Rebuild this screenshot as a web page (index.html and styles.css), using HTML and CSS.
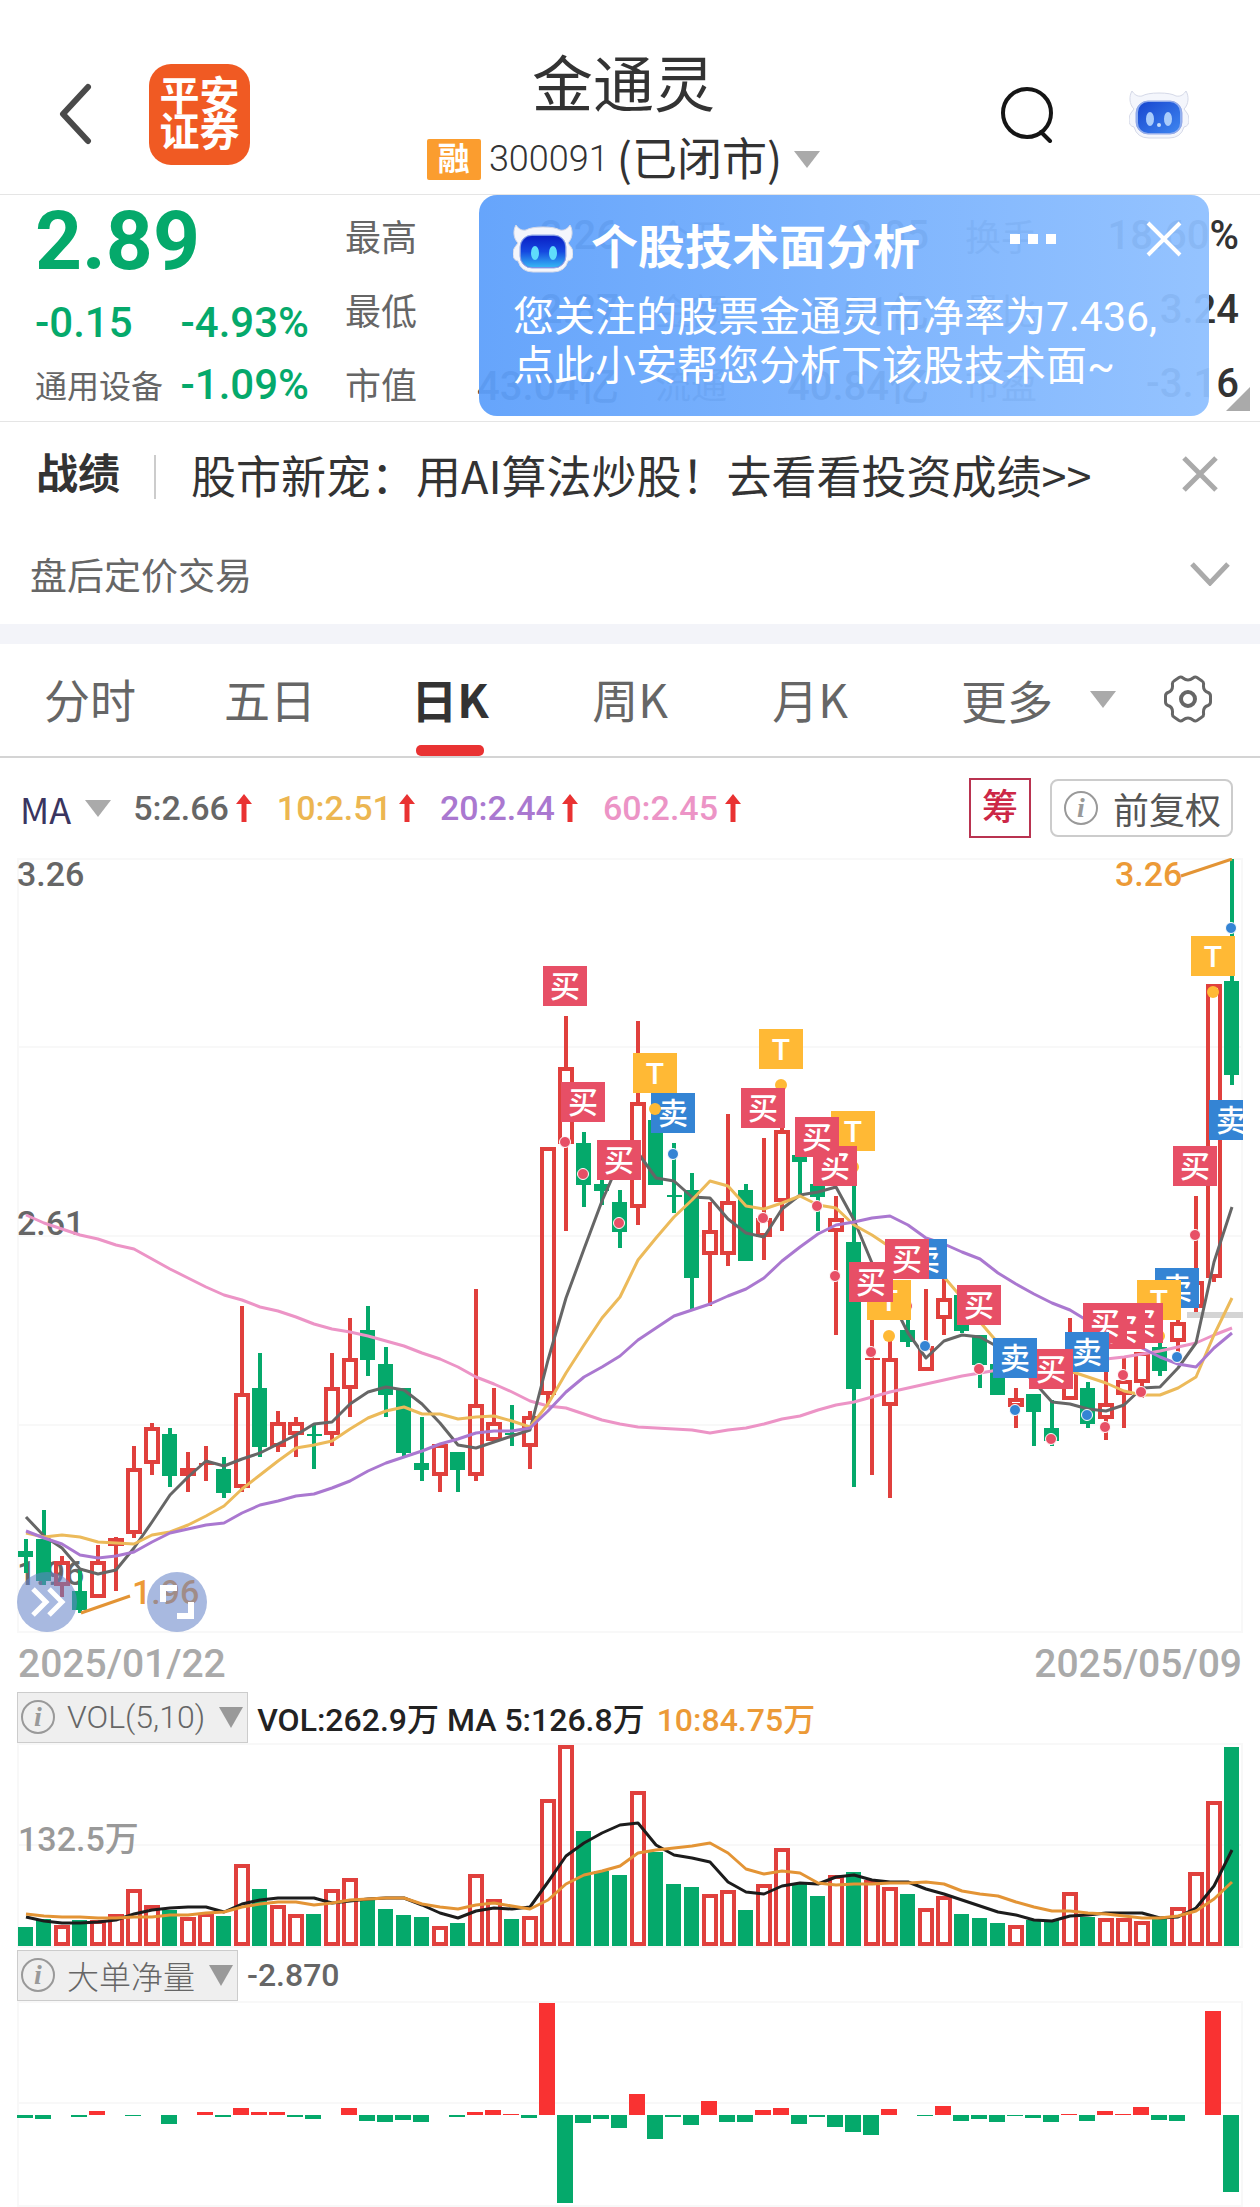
FILE: index.html
```html
<!DOCTYPE html>
<html lang="zh-CN">
<head>
<meta charset="utf-8">
<meta name="viewport" content="width=device-width, initial-scale=1">
<title>金通灵 300091</title>
<link rel="stylesheet" href="styles.css">
</head>
<body>
<svg class="defs" aria-hidden="true">
  <defs>
    <linearGradient id="face" x1="0" y1="0" x2="0" y2="1"><stop offset="0" stop-color="#0a1fc4"/><stop offset=".5" stop-color="#1548e0"/><stop offset="1" stop-color="#35b4f4"/></linearGradient>
    <linearGradient id="face-soft" x1="0" y1="0" x2="1" y2="1"><stop offset="0" stop-color="#1746cf"/><stop offset="1" stop-color="#3f86f0"/></linearGradient>
    <symbol id="robot" viewBox="0 0 60 50">
      <path d="M3 2C0 7 0 15 5 20L2 24Q0 26 0 31Q0 37 5 38Q8 49 20 49H40Q52 49 55 38Q60 37 60 31Q60 26 58 24L55 20C60 15 60 7 57 2C55 5 52 8 47 7Q42 4 30 4Q18 4 13 7C8 8 5 5 3 2Z" fill="#f4f6fc" stroke="#d5d9e8"/>
      <rect x="7" y="12" width="46" height="33" rx="12" fill="currentColor" stroke="#93a8e6"/>
    </symbol>
  </defs>
</svg>

<header class="topbar">
  <div class="topbar-side">
    <button class="icon-button" aria-label="返回"><svg width="34" height="62" viewBox="0 0 34 62"><path d="M30 4 5 31 30 58" fill="none" stroke="#4a4a4a" stroke-width="6" stroke-linecap="round" stroke-linejoin="round"/></svg></button>
    <a class="brand" href="#">平安<br>证券</a>
  </div>
  <div class="topbar-title">
    <h1>金通灵</h1>
    <button class="stock-switch"><span class="margin-tag">融</span><span class="code">300091</span><span class="status">(已闭市)</span><i class="caret"></i></button>
  </div>
  <div class="topbar-side topbar-actions">
    <button class="icon-button" aria-label="搜索"><svg width="54" height="58" viewBox="0 0 54 58"><circle cx="27" cy="28" r="24" fill="none" stroke="#151515" stroke-width="4"/><path d="m41 47 9 9" stroke="#151515" stroke-width="4" stroke-linecap="round"/></svg></button>
    <button class="icon-button" aria-label="智能助手"><svg width="60" height="50" viewBox="0 0 60 50"><use href="#robot" color="#8fb0f2"/><rect x="9" y="13" width="42" height="31" rx="10" fill="url(#face-soft)"/><ellipse cx="21" cy="30" rx="4" ry="7" fill="#a9ccfb"/><ellipse cx="39" cy="30" rx="4" ry="7" fill="#a9ccfb"/><circle cx="30" cy="36" r="2" fill="#c5dcfb"/></svg></button>
  </div>
</header>

<section class="quote">
  <div class="price-box">
    <strong class="price">2.89</strong>
    <div class="change"><span>-0.15</span><span>-4.93%</span></div>
    <div class="sector"><a href="#">通用设备</a><span>-1.09%</span></div>
  </div>
  <dl class="stats">
    <div><dt>最高</dt><dd>3.26</dd></div>
    <div><dt>今开</dt><dd>3.05</dd></div>
    <div><dt>换手</dt><dd>18.60%</dd></div>
    <div><dt>最低</dt><dd>2.87</dd></div>
    <div><dt>金额</dt><dd>8.01亿</dd></div>
    <div><dt>量比</dt><dd>3.24</dd></div>
    <div><dt>市值</dt><dd>43.04亿</dd></div>
    <div><dt>流通</dt><dd>40.84亿</dd></div>
    <div><dt>市盈</dt><dd>-3.16</dd></div>
  </dl>
  <i class="corner"></i>
  <aside class="assistant">
    <div class="assistant-head">
      <svg width="60" height="50" viewBox="0 0 60 50"><use href="#robot" color="#5c7de6"/><rect x="8" y="13" width="44" height="31" rx="11" fill="url(#face)"/><ellipse cx="22" cy="30" rx="4" ry="7" fill="#5fdcfb"/><ellipse cx="40" cy="30" rx="4" ry="7" fill="#5fdcfb"/></svg>
      <h2>个股技术面分析</h2>
      <button class="icon-button more-dots" aria-label="更多操作"><svg width="46" height="10" viewBox="0 0 46 10"><path d="M0 0h10v10H0zM18 0h10v10H18zM36 0h10v10H36z" fill="#fff"/></svg></button>
      <button class="icon-button" aria-label="关闭提示"><svg width="36" height="36" viewBox="0 0 36 36"><path d="m2 2 32 32M34 2 2 34" stroke="#fff" stroke-width="4"/></svg></button>
    </div>
    <p>您关注的股票金通灵市净率为7.436,<br>点此小安帮您分析下该股技术面~</p>
  </aside>
</section>

<section class="news">
  <strong>战绩</strong>
  <a href="#">股市新宠：用AI算法炒股！去看看投资成绩&gt;&gt;</a>
  <button class="icon-button" aria-label="关闭"><svg width="36" height="36" viewBox="0 0 36 36"><path d="m2 2 32 32M34 2 2 34" stroke="#aaa" stroke-width="5"/></svg></button>
</section>
<button class="after-hours"><span>盘后定价交易</span><svg width="40" height="24" viewBox="0 0 40 24"><path d="m2 2 18 19L38 2" fill="none" stroke="#aaa" stroke-width="5"/></svg></button>

<nav class="tabs">
  <button>分时</button>
  <button>五日</button>
  <button class="active">日K</button>
  <button>周K</button>
  <button>月K</button>
  <div class="tabs-more">
    <button>更多<i class="caret"></i></button>
    <button class="icon-button" aria-label="设置"><svg width="48" height="48" viewBox="0 0 48 48"><path d="M15 2.500Q17 1.500 19 3Q24 7 29 3Q31 1.500 33 2.500L38 6Q40 7 39.500 10Q39 16 44 17.500Q46.500 18.500 46.500 21V27Q46.500 29.500 44 30.500Q39 32 39.500 38Q40 41 38 42L33 45.500Q31 46.500 29 45Q24 41 19 45Q17 46.500 15 45.500L10 42Q8 41 8.500 38Q9 32 4 30.500Q1.500 29.500 1.500 27V21Q1.500 18.500 4 17.500Q9 16 8.500 10Q8 7 10 6Z" fill="none" stroke="#666" stroke-width="3"/><circle cx="24" cy="24" r="7" fill="none" stroke="#666" stroke-width="4"/></svg></button>
  </div>
</nav>

<div class="ma-row">
  <button class="ma-select">MA<i class="caret"></i></button>
  <span class="ma ma5">5:2.66<svg width="16" height="28" viewBox="0 0 16 28"><path d="M8 0 16 10H10.500V28H5.500V10H0Z"/></svg></span>
  <span class="ma ma10">10:2.51<svg width="16" height="28" viewBox="0 0 16 28"><path d="M8 0 16 10H10.500V28H5.500V10H0Z"/></svg></span>
  <span class="ma ma20">20:2.44<svg width="16" height="28" viewBox="0 0 16 28"><path d="M8 0 16 10H10.500V28H5.500V10H0Z"/></svg></span>
  <span class="ma ma60">60:2.45<svg width="16" height="28" viewBox="0 0 16 28"><path d="M8 0 16 10H10.500V28H5.500V10H0Z"/></svg></span>
  <button class="chips">筹</button>
  <button class="adjust"><span class="info">i</span>前复权</button>
</div>

<main>
  <div class="kline">
    <svg id="kline" class="chart" viewBox="0 858 1260 776" role="img" aria-label="日K线图"></svg>
    <div class="kline-tools">
      <button aria-label="展开"><svg width="60" height="60" viewBox="0 0 60 60"><path d="M16 17 29 30 16 43M32 17 45 30 32 43" fill="none" stroke="#fff" stroke-width="5"/></svg></button>
      <button aria-label="全屏"><svg width="60" height="60" viewBox="0 0 60 60"><path d="M16 30V16H30M30 44H44V30" fill="none" stroke="#fff" stroke-width="6"/></svg></button>
    </div>
  </div>
  <div class="dates"><time datetime="2025-01-22">2025/01/22</time><time datetime="2025-05-09">2025/05/09</time></div>

  <div class="indicator">
    <button><span class="info">i</span>VOL(5,10)<i class="caret"></i></button>
    <span class="legend">VOL:262.9万 MA 5:126.8万</span>
    <span class="legend legend-orange">10:84.75万</span>
  </div>
  <svg id="volume" class="chart" viewBox="0 1743 1260 206" role="img" aria-label="成交量"></svg>

  <div class="indicator">
    <button><span class="info">i</span>大单净量<i class="caret"></i></button>
    <span class="legend legend-gray">-2.870</span>
  </div>
  <svg id="flow" class="chart" viewBox="0 2001 1260 206" role="img" aria-label="大单净量"></svg>
</main>
<script src="chart.js"></script>
</body>
</html>
```

FILE: styles.css
```css
* { box-sizing: border-box; }
body {
  margin: 0;
  background: #fff;
  color: #333;
  font-family: Roboto, "Noto Sans CJK SC", sans-serif;
}
h1, h2, p, dl, dd { margin: 0; }
a { color: inherit; text-decoration: none; }
svg { display: block; flex: none; }
button {
  margin: 0;
  padding: 0;
  border: 0;
  background: none;
  color: inherit;
  font: inherit;
  cursor: pointer;
}
.defs { position: absolute; width: 0; height: 0; }
.icon-button { display: block; flex: none; }
.caret {
  flex: none;
  border: 13px solid transparent;
  border-top: 17px solid #aaa;
  border-bottom: 0;
}
.info {
  display: inline-flex;
  align-items: center;
  justify-content: center;
  width: 34px;
  height: 34px;
  border: 2px solid #999;
  border-radius: 50%;
  color: #999;
  font: italic bold 28px/30px "Liberation Serif", serif;
}

.topbar {
  display: grid;
  grid-template-columns: 1fr auto 1fr;
  align-items: center;
  height: 195px;
  padding: 34px 71px 0 58px;
  border-bottom: 1px solid #e5e5e5;
}
.topbar-side { display: flex; align-items: center; gap: 57px; }
.topbar-actions { justify-content: flex-end; gap: 75px; }
.brand {
  width: 101px;
  height: 101px;
  padding-top: 15px;
  border-radius: 22px;
  background: #f05a23;
  color: #fff;
  font-size: 40px;
  font-weight: 700;
  line-height: 36px;
  text-align: center;
}
.topbar-title { padding-top: 8px; text-align: center; }
h1 { margin-bottom: 18px; font-size: 61px; font-weight: 400; line-height: 64px; }
.stock-switch { display: flex; align-items: center; height: 46px; }
.margin-tag {
  width: 54px;
  height: 41px;
  margin-right: 8px;
  border-radius: 2px;
  background: #fb9d2f;
  color: #fff;
  font-size: 32px;
  font-weight: 700;
  line-height: 40px;
}
.code { font-size: 36px; font-weight: 300; }
.status { margin: 0 12px 4px 8px; font: 45px/44px "Noto Sans CJK SC", sans-serif; }

.quote {
  position: relative;
  display: grid;
  grid-template-columns: 274px 1fr;
  gap: 36px;
  height: 227px;
  padding: 0 21px 0 35px;
  border-bottom: 1px solid #e5e5e5;
}
.price-box { color: #05a96b; font-size: 42px; font-weight: 500; }
.price { display: block; font-size: 82px; line-height: 92px; }
.change, .sector { display: flex; justify-content: space-between; align-items: center; }
.change { height: 70px; }
.sector { height: 54px; }
.sector a { color: #666; font-size: 32px; font-weight: 400; }
.stats {
  display: grid;
  grid-template-columns: repeat(3, 1fr);
  grid-auto-rows: 74px;
  column-gap: 36px;
  padding-top: 3px;
}
.stats div { display: flex; justify-content: space-between; align-items: center; }
.stats dt { color: #666; font-size: 36px; }
.stats dd { font-size: 40px; font-weight: 500; }
.corner {
  position: absolute;
  right: 10px;
  bottom: 10px;
  border-left: 24px solid transparent;
  border-bottom: 24px solid #aaa;
}
.assistant {
  position: absolute;
  top: 0;
  right: 51px;
  width: 730px;
  height: 221px;
  padding: 24px 27px 0 34px;
  border-radius: 18px;
  background: linear-gradient(90deg, rgba(94, 160, 251, .95), rgba(143, 192, 255, .95));
  color: #fff;
}
.assistant-head { display: flex; align-items: center; height: 58px; }
.assistant h2 { margin: 0 auto 0 18px; font-size: 47px; font-weight: 700; line-height: 58px; }
.more-dots { margin: 0 90px 18px 0; }
.assistant-head .icon-button:last-child { margin-bottom: 18px; }
.assistant p { padding-top: 16px; font-size: 41px; line-height: 49px; white-space: nowrap; }

.news {
  display: flex;
  align-items: center;
  height: 106px;
  padding: 0 42px 2px 36px;
  font-family: "Noto Sans CJK SC", sans-serif;
}
.news strong { font-size: 42px; line-height: 44px; }
.news strong::after {
  content: "";
  display: inline-block;
  height: 44px;
  margin-left: 34px;
  border-left: 2px solid #ccc;
  vertical-align: middle;
}
.news a { flex: 1; margin-left: 35px; font-size: 45px; }
.after-hours {
  display: flex;
  justify-content: space-between;
  align-items: center;
  width: 100%;
  height: 96px;
  padding: 0 30px 5px;
  color: #666;
  font-size: 37px;
}

.tabs {
  display: grid;
  grid-template-columns: repeat(5, 1fr) 2fr;
  height: 134px;
  border-top: 20px solid #f3f4f9;
  border-bottom: 2px solid #d4d4d4;
  color: #666;
  font: 46px/108px "Noto Sans CJK SC", sans-serif;
}
.tabs > button { padding-bottom: 4px; }
.tabs .active { position: relative; color: #333; font-weight: 700; }
.tabs .active::after {
  content: "";
  position: absolute;
  bottom: 0;
  left: calc(50% - 34px);
  width: 68px;
  height: 11px;
  border-radius: 5px;
  background: #e93232;
}
.tabs-more { display: flex; justify-content: space-between; align-items: center; padding: 0 48px 2px 61px; }
.tabs-more button:first-child { display: flex; align-items: center; gap: 37px; }

.ma-row { display: flex; align-items: center; height: 100px; padding: 0 27px 0 20px; font-size: 34px; font-weight: 500; }
.ma-select {
  display: flex;
  align-items: center;
  gap: 14px;
  margin-right: 22px;
  color: #3a3560;
  font: 36px "Noto Sans CJK SC", sans-serif;
}
.ma { display: flex; align-items: center; gap: 7px; margin-right: 25px; }
.ma svg { fill: #e93232; }
.ma5 { color: #666; }
.ma10 { color: #ecb651; }
.ma20 { color: #aa78d0; }
.ma60 { color: #ec94c6; }
.chips {
  width: 62px;
  height: 60px;
  margin: 0 19px 0 auto;
  border: 2px solid #b93350;
  color: #cc2746;
  font-size: 36px;
  line-height: 56px;
}
.adjust {
  display: flex;
  align-items: center;
  gap: 15px;
  height: 58px;
  padding: 0 10px 0 12px;
  border: 2px solid #ccc;
  border-radius: 8px;
  color: #555;
  font-size: 36px;
  font-weight: 400;
}

.chart { width: 100%; height: auto; overflow: hidden; }
.kline { position: relative; }
.kline-tools { position: absolute; left: 17px; bottom: 2px; display: flex; gap: 70px; }
.kline-tools button { width: 60px; height: 60px; border-radius: 50%; background: rgba(100, 130, 200, .56); }
.dates {
  display: flex;
  justify-content: space-between;
  height: 57px;
  padding: 0 18px;
  color: #aaa;
  font-size: 39px;
  font-weight: 500;
  line-height: 60px;
}
.indicator { display: flex; align-items: center; height: 52px; padding-left: 17px; font-size: 32px; font-weight: 500; }
.indicator button {
  display: flex;
  align-items: center;
  height: 51px;
  padding: 0 4px 0 3px;
  margin-right: 9px;
  border: 1px solid #ccc;
  background: #efefef;
  color: #666;
  font-size: 32px;
  font-weight: 300;
}
.indicator .info { margin-right: 12px; }
.indicator .caret { margin-left: 14px; border-top: 21px solid #999; border-right-width: 12px; border-left-width: 12px; }
.legend { margin-right: 12px; color: #222; }
.legend-orange { color: #ec9a37; }
.legend-gray { color: #666; }

.grid { fill: none; stroke: #f8f8f8; stroke-width: 2; }
.up { fill: none; stroke: #e0403d; stroke-width: 4; }
.down { fill: #05a96b; }
.line { fill: none; stroke-width: 3; stroke-linejoin: round; }
.axis { fill: #666; font-size: 34px; font-weight: 500; }
.axis-vol { fill: #999; font-size: 34px; font-weight: 500; }
.mark { fill: #ec9a37; font-size: 34px; font-weight: 500; }
.tag { fill: #fff; font-size: 30px; font-weight: 500; text-anchor: middle; }
```

FILE: chart.js
```js
// Day n is centred on x = 26 + 18n in every panel.
const X = n => 26 + 18 * n;
const GREEN = '#05a96b', RED = '#e0403d';

// [direction, high, body top, body bottom, low] as panel heights
const candles = [
  ['d',1539,1551,1557,1573],['d',1510,1539,1581,1585],['u',1556,1561,1586,1597],['d',1569,1591,1610,1613],
  ['u',1545,1561,1598,1598],['u',1537,1538,1546,1591],['u',1446,1468,1534,1538],['u',1423,1427,1464,1475],
  ['d',1428,1434,1476,1487],['u',1452,1468,1476,1492],['u',1446,1464,1464,1481],['d',1457,1469,1493,1498],
  ['u',1306,1393,1488,1492],['d',1353,1388,1447,1457],['u',1411,1422,1447,1452],['u',1417,1422,1435,1457],
  ['d',1425,1435,1435,1469],['u',1353,1387,1435,1446],['u',1318,1358,1389,1417],['d',1306,1330,1360,1376],
  ['d',1347,1364,1395,1417],['d',1388,1388,1453,1456],['d',1417,1463,1470,1481],['u',1444,1444,1476,1492],
  ['d',1452,1452,1470,1492],['u',1289,1404,1476,1481],['u',1388,1422,1441,1441],['d',1405,1434,1434,1446],
  ['u',1411,1416,1447,1469],['u',1147,1147,1395,1404],['u',1016,1067,1144,1231],['d',1132,1143,1185,1207],
  ['d',1176,1184,1191,1205],['d',1190,1202,1232,1248],['u',1021,1102,1208,1225],['d',1094,1120,1185,1185],
  ['d',1143,1196,1196,1213],['d',1173,1190,1278,1311],['u',1202,1230,1255,1306],['u',1114,1201,1255,1266],
  ['d',1184,1190,1261,1261],['u',1138,1218,1237,1260],['u',1100,1130,1202,1231],['d',1150,1155,1162,1194],
  ['d',1180,1184,1197,1231],['u',1196,1218,1232,1335],['d',1150,1242,1389,1487],['u',1280,1359,1359,1475],
  ['u',1340,1358,1406,1498],['d',1310,1330,1342,1347],['u',1289,1346,1371,1371],['u',1275,1298,1319,1335],
  ['d',1289,1295,1331,1333],['d',1335,1335,1365,1388],['d',1364,1364,1395,1395],['u',1388,1398,1407,1428],
  ['d',1394,1394,1412,1446],['d',1400,1428,1441,1446],['u',1318,1370,1400,1400],['d',1382,1388,1424,1428],
  ['u',1370,1403,1419,1440],['u',1358,1380,1395,1428],['u',1352,1352,1383,1398],['d',1342,1347,1371,1376],
  ['u',1318,1322,1342,1352],['u',1196,1281,1308,1312],['u',984,984,1278,1282],['d',859,981,1075,1085]
];
const averages = {
  '#ec94c6': [1215,1223,1229,1235,1239,1245,1249,1259,1269,1278,1287,1295,1300,1307,1311,1317,1324,1329,1332,1336,1341,1346,1353,1359,1367,1377,1384,1392,1401,1406,1408,1414,1420,1424,1427,1428,1429,1430,1433,1430,1428,1424,1419,1416,1410,1405,1402,1397,1392,1388,1384,1380,1376,1373,1370,1368,1366,1364,1362,1360,1359,1357,1354,1351,1347,1343,1335,1328],
  '#666666': [1517,1536,1548,1569,1574,1570,1548,1522,1495,1477,1461,1466,1459,1453,1444,1435,1424,1422,1404,1392,1387,1390,1404,1423,1445,1448,1442,1436,1430,1360,1298,1249,1201,1160,1153,1178,1181,1197,1198,1219,1233,1237,1209,1195,1192,1187,1220,1263,1297,1333,1358,1341,1335,1337,1347,1363,1382,1402,1404,1409,1411,1405,1388,1387,1368,1343,1262,1207],
  '#ecba5a': [1533,1537,1535,1537,1542,1543,1544,1535,1532,1525,1516,1506,1489,1475,1461,1448,1445,1441,1429,1418,1411,1407,1414,1414,1419,1417,1416,1421,1427,1404,1373,1345,1318,1297,1260,1238,1217,1200,1181,1186,1206,1209,1203,1196,1205,1208,1225,1235,1247,1257,1267,1277,1298,1322,1343,1357,1363,1368,1371,1377,1383,1391,1395,1395,1388,1377,1335,1298],
  '#aa78d0': [1531,1538,1544,1555,1558,1556,1552,1542,1533,1529,1525,1523,1513,1505,1501,1496,1494,1488,1481,1471,1463,1457,1451,1444,1439,1433,1431,1431,1428,1411,1392,1377,1367,1356,1340,1328,1316,1310,1304,1296,1289,1278,1261,1247,1234,1225,1222,1218,1216,1225,1238,1244,1252,1259,1273,1284,1294,1303,1310,1321,1332,1340,1348,1357,1364,1367,1348,1333]
};
// [day, label, tag top, dot height]
const signals = [
  [30,'买',966,1142],[31,'买',1082,1174],[33,'买',1140,1223],[35,'T',1053,1109],[36,'卖',1093,1154],
  [41,'买',1088,1218],[42,'T',1029,1085],[44,'买',1117,1206],[45,'买',1146,1276],[46,'T',1111,1167],
  [47,'买',1262,1352],[48,'T',1280,1336],[49,'买',1239,1306],[50,'卖',1239,1346],[53,'买',1285,1369],
  [55,'卖',1338,1410],[57,'买',1349,1439],[59,'卖',1332,1415],[60,'买',1303,1427],[61,'买',1309,1375],
  [62,'买',1303,1392],[63,'T',1280,1336],[64,'卖',1268,1357],[65,'买',1146,1235],[66,'T',936,992],[67,'卖',1100,928]
];
const volumes = [1927,1919,1925,1920,1920,1914,1889,1905,1910,1917,1913,1916,1864,1889,1905,1914,1914,1889,1878,1900,1909,1915,1917,1926,1923,1874,1899,1919,1916,1799,1745,1831,1871,1875,1791,1852,1884,1887,1894,1890,1910,1884,1848,1884,1896,1875,1872,1880,1887,1894,1908,1896,1914,1918,1923,1925,1920,1920,1892,1917,1918,1918,1921,1917,1907,1872,1801,1747];
const volumeAverages = {
  '#1c1c1c': [1917,1921,1923,1923,1922,1920,1914,1910,1908,1907,1907,1912,1904,1900,1898,1898,1898,1903,1901,1899,1898,1898,1905,1913,1918,1911,1908,1909,1907,1882,1856,1843,1833,1825,1823,1845,1855,1858,1862,1882,1892,1894,1886,1883,1884,1877,1875,1880,1882,1882,1889,1894,1900,1906,1912,1915,1920,1921,1916,1915,1913,1913,1913,1918,1917,1908,1886,1850],
  '#e39435': [1914,1916,1917,1917,1918,1918,1917,1917,1915,1915,1913,1912,1907,1904,1902,1902,1905,1903,1900,1899,1898,1898,1904,1907,1909,1905,1903,1906,1909,1900,1884,1875,1871,1866,1853,1850,1848,1846,1843,1853,1869,1874,1871,1873,1883,1885,1884,1884,1883,1883,1882,1884,1891,1894,1896,1902,1907,1911,1911,1913,1914,1916,1918,1918,1916,1911,1899,1882]
};
const flows = [-3,-4,0,-2,4,0,-1,0,-9,0,3,-2,7,3,3,-2,-4,0,7,-6,-7,-5,-7,0,-2,3,5,1,-3,112,-88,-8,-4,-13,21,-24,-2,-10,14,-7,-7,5,7,-9,-2,-12,-17,-20,6,0,-1,9,-6,-4,-7,-1,-3,-7,1,-6,4,1,8,-5,-6,0,104,-77];

const line = (pts, color) =>
  `<polyline class="line" stroke="${color}" points="${pts.map((y, n) => X(n) + ',' + y).join(' ')}"/>`;
const lines = set => Object.entries(set).map(([color, pts]) => line(pts, color)).join('');

function candle([dir, high, top, bottom, low], n) {
  const x = X(n), color = dir === 'u' ? RED : GREEN;
  const wick = `<path d="M${x} ${high}V${top}M${x} ${bottom}V${low}" stroke="${color}" stroke-width="4"/>`;
  if (top === bottom) return wick + `<path d="M${x - 7} ${top}h15" stroke="${color}" stroke-width="2"/>`;
  return wick + (dir === 'u'
    ? `<rect class="up" x="${x - 6}" y="${top + 2}" width="12" height="${bottom - top - 4}"/>`
    : `<rect class="down" x="${x - 8}" y="${top}" width="15" height="${bottom - top}"/>`);
}
function signal([n, label, top, dot]) {
  const x = X(n) - 1;
  const color = { '买': '#e74f66', '卖': '#3484d4', 'T': '#ffb935' }[label];
  const ring = label === 'T' ? `r="6" fill="${color}"` : `r="5.5" fill="${color}" stroke="#fff" stroke-width="1"`;
  return `<rect x="${x - 22}" y="${top}" width="44" height="40" fill="${color}"/>` +
    `<text class="tag" x="${x}" y="${top + 31}">${label}</text><circle cx="${x}" cy="${dot}" ${ring}/>`;
}

document.getElementById('kline').innerHTML =
  '<clipPath id="panel"><rect x="17" y="858" width="1226" height="776"/></clipPath>' +
  '<path class="grid" d="M18 859H1242V1632H18ZM18 1047H1242M18 1236H1242M18 1425H1242"/>' +
  '<text class="axis" x="17" y="886">3.26</text><text class="axis" x="17" y="1235">2.61</text><text class="axis" x="17" y="1585">1.96</text>' +
  '<path d="M1187 1315H1243" stroke="#d4d4d4" stroke-width="6"/>' +
  candles.map(candle).join('') + lines(averages) +
  '<path d="M81 1613 130 1596M1181 876 1232 859" stroke="#e39435" stroke-width="3"/>' +
  '<text class="mark" x="132" y="1604">1.96</text><text class="mark" x="1115" y="886">3.26</text>' +
  '<g clip-path="url(#panel)">' + signals.slice().reverse().map(signal).join('') + '</g>';

document.getElementById('volume').innerHTML =
  '<path class="grid" d="M18 1744H1242V1947H18ZM18 1845H1242"/><text class="axis-vol" x="18" y="1851">132.5万</text>' +
  volumes.map((y, n) => candles[n][0] === 'u'
    ? `<rect class="up" x="${X(n) - 6}" y="${y + 2}" width="12" height="${1942 - y}"/>`
    : `<rect class="down" x="${X(n) - 8}" y="${y}" width="15" height="${1946 - y}"/>`).join('') +
  lines(volumeAverages);

document.getElementById('flow').innerHTML =
  '<path class="grid" d="M18 2002H1242V2206H18ZM18 2103H1242"/>' +
  flows.map((v, n) => v === 0 ? '' :
    `<rect fill="${v > 0 ? '#f93232' : GREEN}" x="${X(n) - 9}" y="${v > 0 ? 2115 - v : 2115}" width="16" height="${Math.abs(v)}"/>`).join('');
```
